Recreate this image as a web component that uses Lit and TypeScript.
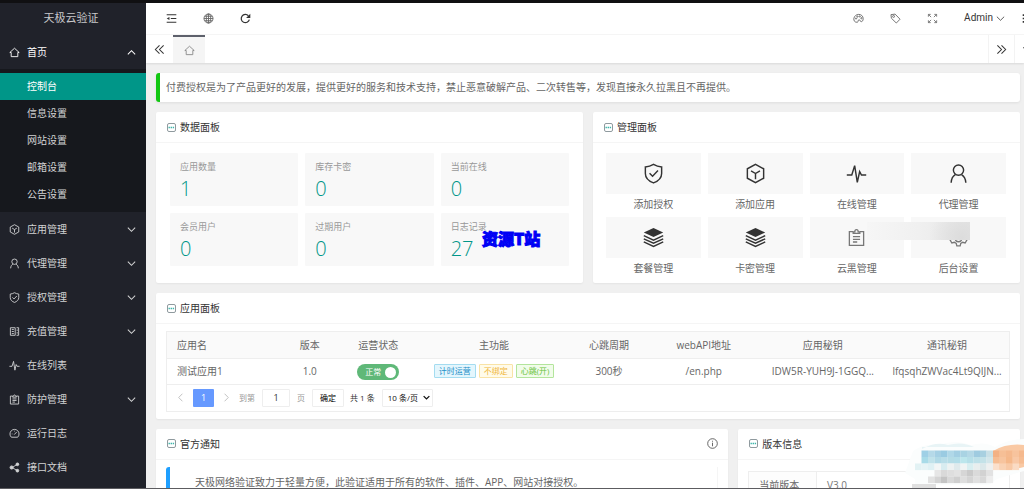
import { LitElement, html, css, svg } from "lit";
import { customElement, property, state } from "lit/decorators.js";
import { classMap } from "lit/directives/class-map.js";

const icons: Record<string, unknown> = {
  home: svg`<path d="M1.2 8 8 1.8 14.8 8H12.8V14H3.2V8Z"/>`,
  cube: svg`<path d="M8 1 14.2 4.4V11.6L8 15 1.8 11.6V4.4ZM4.6 6 8 8 11.4 6M8 8V12.4"/>`,
  user: svg`<circle cx="8" cy="5.4" r="3.9"/><path d="M2.4 15C2.6 11.6 4 9.8 5.6 8.9M10.4 9.1C12.4 10.2 13.4 12.2 13.6 15"/>`,
  shield: svg`<path d="M8 1C10 2.2 12 2.8 14.2 3V8C14.2 11.6 11.6 13.8 8 15.2 4.4 13.8 1.8 11.6 1.8 8V3C4 2.8 6 2.2 8 1ZM5 7.8 7.3 10.1 11.4 5.8"/>`,
  ledger: svg`<path d="M2 2.5H9V13.5H2ZM4 5H7M4 8H7M4 11H7M11 2.5H14V13.5H11M11 6H13M11 10H13"/>`,
  pulse: svg`<path d="M.6 9.2H4.4L6.6 2 8.6 14.8 10.4 6.6 11.8 9.2H15.4"/>`,
  clipboard: svg`<path d="M5.2 3H2V14.6H14V3H10.8M5.2 4.6V3.2H6.6A1.4 1.8 0 0 1 9.4 3.2H10.8V4.6ZM5 7.2H11M5 9.5H11M5 11.8H8.6"/>`,
  gauge: svg`<path d="M3.4 13.4A6.6 6.6 0 1 1 12.6 13.4ZM7.6 9.6 11.2 5.8M4 8.6H5M8 4V5"/>`,
  share: svg`<path d="M12 3.4 4.6 8 12 12.6"/><g fill="currentColor"><circle cx="3.8" cy="8" r="2.3"/><circle cx="12.2" cy="3.4" r="2"/><circle cx="12.2" cy="12.6" r="2"/></g>`,
  up: svg`<path d="M1.5 11.2 8 4.8 14.5 11.2"/>`,
  down: svg`<path d="M1.5 4.8 8 11.2 14.5 4.8"/>`,
  left: svg`<path d="M10.8 2.5 5.4 8 10.8 13.5"/>`,
  right: svg`<path d="M5.2 2.5 10.6 8 5.2 13.5"/>`,
  first: svg`<path d="M8 2 2 8 8 14M14 2 8 8 14 14"/>`,
  last: svg`<path d="M2 2 8 8 2 14M8 2 14 8 8 14"/>`,
  fold: svg`<path d="M1 2.5H15M7 8H15M1 13.5H15"/><path fill="currentColor" stroke="none" d="M1 8 5 5.8V10.2Z"/>`,
  globe: svg`<circle cx="8" cy="8" r="6.6"/><ellipse cx="8" cy="8" rx="3.2" ry="6.6"/><path d="M8 1.4V14.6M1.4 8H14.6M2.4 4.8H13.6M2.4 11.2H13.6"/>`,
  refresh: svg`<path d="M13.6 9.6A6 6 0 1 1 12.2 4"/><path fill="currentColor" stroke="none" d="M15 1V7.2H8.8Z"/>`,
  palette: svg`<path d="M6.4 13.4C2.8 14.2.8 11 1.2 8 1.8 4.4 5 2 8.4 2 12 2 14.8 4.6 14.8 8.2 14.8 11 13.6 12.6 12 12.6 10 12.6 11 9.8 8.8 9.8 6.8 9.8 8.2 13 6.4 13.4Z"/><circle cx="4.4" cy="8" r=".9"/><circle cx="6.4" cy="5.2" r=".9"/><circle cx="9.8" cy="5" r=".9"/><circle cx="12.2" cy="7.6" r=".9"/>`,
  tag: svg`<path d="M1.4 2.4 7.4 1.6 14.6 9 9.2 14.6 2 7.6Z"/><circle cx="5.2" cy="5" r="1.4"/>`,
  expand: svg`<path d="M2 5.4V2H5.4M2.2 2.2 6 6M10.6 2H14V5.4M13.8 2.2 10 6M2 10.6V14H5.4M2.2 13.8 6 10M14 10.6V14H10.6M13.8 13.8 10 10"/>`,
  more: svg`<path stroke-width="2.4" d="M1 3H15M1 8H15M1 13H15"/>`,
  layers: svg`<path fill="currentColor" stroke="none" d="M8 .8 15.4 4.2 8 7.6.6 4.2Z"/><path d="M.6 6.6 8 10 15.4 6.6M.6 9 8 12.4 15.4 9M.6 11.4 8 14.8 15.4 11.4"/>`,
  gear: svg`<path d="M6.6 1.4H9.4L9.9 3.5 11.5 4.4 13.6 3.8 15 6.2 13.4 7.6V8.9L15 10.2 13.6 12.6 11.5 12 9.9 12.9 9.4 15H6.6L6.1 12.9 4.5 12 2.4 12.6 1 10.2 2.6 8.9V7.6L1 6.2 2.4 3.8 4.5 4.4 6.1 3.5Z"/><circle cx="8" cy="9" r="2.6"/>`,
  info: svg`<circle cx="8" cy="8" r="7"/><path d="M8 6.8V12M8 4V5.4"/>`,
};

@customElement("ui-icon")
export class UiIcon extends LitElement {
  @property() name = "";
  @property({ type: Number }) stroke = 1.3;
  static styles = css`
    :host { display: inline-flex; width: 11px; height: 11px; flex: none; }
    svg { width: 100%; height: 100%; display: block; }
  `;
  render() {
    return html`<svg viewBox="0 0 16 16" fill="none" stroke="currentColor" stroke-width=${this.stroke} aria-hidden="true">${icons[this.name]}</svg>`;
  }
}

@customElement("panel-card")
export class PanelCard extends LitElement {
  @property() heading = "";
  @property({ type: Boolean }) info = false;
  static styles = css`
    :host { display: block; background: #fff; border-radius: 2px; box-shadow: 0 1px 2px rgba(0, 0, 0, 0.05); min-width: 0; }
    header { display: flex; align-items: center; height: 31px; padding: 0 10px 0 11px; border-bottom: 1px solid #f5f5f5; box-sizing: border-box; }
    .mark { width: 9px; height: 9px; margin-right: 4px; }
    h2 { margin: 0; font-size: 10px; font-weight: 400; line-height: 30px; color: #333; flex: 1; }
    ui-icon { color: #555; }
  `;
  render() {
    return html`<header>
        <svg class="mark" viewBox="0 0 9 9" fill="none" aria-hidden="true">
          <rect x=".5" y=".5" width="8" height="8" rx="1.5" stroke="#8f9a9e" />
          <path d="M1.5 4.5H7.5" stroke="#3eb5aa" stroke-width="1.4" stroke-dasharray="1.4 .7" />
        </svg>
        <h2>${this.heading}</h2>
        ${this.info ? html`<ui-icon name="info"></ui-icon>` : null}
      </header>
      <slot></slot>`;
  }
}

const subItems = ["控制台", "信息设置", "网站设置", "邮箱设置", "公告设置"];
const navItems = [
  { icon: "cube", label: "应用管理", sub: true },
  { icon: "user", label: "代理管理", sub: true },
  { icon: "shield", label: "授权管理", sub: true },
  { icon: "ledger", label: "充值管理", sub: true },
  { icon: "pulse", label: "在线列表", sub: false },
  { icon: "clipboard", label: "防护管理", sub: true },
  { icon: "gauge", label: "运行日志", sub: false },
  { icon: "share", label: "接口文档", sub: false },
];
const stats = [
  ["应用数量", "1"], ["库存卡密", "0"], ["当前在线", "0"],
  ["会员用户", "0"], ["过期用户", "0"], ["日志记录", "27"],
];
const actions = [
  ["shield", "添加授权"], ["cube", "添加应用"], ["pulse", "在线管理"], ["user", "代理管理"],
  ["layers", "套餐管理"], ["layers", "卡密管理"], ["clipboard", "云黑管理"], ["gear", "后台设置"],
];
const columns = ["应用名", "版本", "运营状态", "主功能", "心跳周期", "webAPI地址", "应用秘钥", "通讯秘钥"];

/* Mosaic tiles, 6.5 units each: column, row, colour. */
const tiles: [number, number, string][] = [
  [3, 1, "#9fd0e6"], [4, 1, "#b5d9e8"], [5, 1, "#a5d0e4"], [6, 1, "#9acbe2"], [7, 1, "#b0d8e8"], [8, 1, "#a3cfe3"], [9, 1, "#a9d3e3"], [10, 1, "#b4d8e6"], [11, 1, "#9fcbe0"], [12, 1, "#a8d0e0"], [13, 1, "#c9e0e6"],
  [3, 2, "#a8dbe8"], [4, 2, "#c0e2ea"], [5, 2, "#b0d9e6"], [6, 2, "#b8dde8"], [7, 2, "#b4dce6"], [8, 2, "#b2dde8"], [9, 2, "#bce6ec"], [10, 2, "#b6dfe8"], [11, 2, "#bde0e8"], [12, 2, "#c4e2e8"], [13, 2, "#d3e6ea"],
  [2, 3, "#e2f2f4"], [3, 3, "#e6f4f6"], [4, 3, "#dff1f4"], [5, 3, "#f2f6f6"], [6, 3, "#d8ecf0"], [7, 3, "#edf2f2"], [8, 3, "#dfeaec"], [9, 3, "#f0f4f4"], [10, 3, "#d8eef0"], [11, 3, "#e8eeee"], [12, 3, "#dce8ea"], [13, 3, "#eef0f0"],
  [5, 4, "#e6e6e6"], [6, 4, "#d9d9d9"], [7, 4, "#dedede"], [8, 4, "#e2e2e2"], [9, 4, "#d6d6d6"], [10, 4, "#cacaca"], [11, 4, "#dadada"], [12, 4, "#d2d2d2"], [13, 4, "#e2e2e2"],
  [4, 5, "#e2e2e2"], [5, 5, "#d4d4d4"], [6, 5, "#c4c4c4"], [7, 5, "#d8d8d8"], [8, 5, "#cfcfcf"], [9, 5, "#dedede"], [10, 5, "#d4d4d4"], [11, 5, "#e0e0e0"], [12, 5, "#d8d8d8"], [13, 5, "#ededed"],
  [14, 1, "#f3b184"], [15, 1, "#f6bf96"], [16, 1, "#f5b98e"], [17, 1, "#f7c39d"], [18, 1, "#f5b98e"],
  [14, 2, "#f6bd93"], [15, 2, "#f7c49e"], [16, 2, "#f5b88a"], [17, 2, "#f8c8a6"], [18, 2, "#f6bd93"],
  [14, 3, "#fbe0cc"], [15, 3, "#f9d2b4"], [16, 3, "#f8c9a6"], [17, 3, "#fadbc4"],
];

@customElement("app-root")
export class AppRoot extends LitElement {
  @state() active = 0;
  @state() open = true;

  static styles = css`
    :host {
      display: flex; flex-direction: column; height: 100vh; overflow: hidden; position: relative;
      border-top: 3px solid #101012; border-bottom: 1px solid #5c5c60; box-sizing: border-box;
      font: 10px/20px "Open Sans", "Noto Sans CJK SC", sans-serif; color: #666; background: #f0f0f0;
    }
    * { box-sizing: border-box; }
    button, input, select { font: inherit; color: inherit; margin: 0; padding: 0; border: 0; background: none; }
    button { cursor: pointer; display: inline-flex; align-items: center; justify-content: center; }
    a { color: inherit; text-decoration: none; }
    .shell { flex: 1; min-height: 0; display: flex; }
    .side { width: 146px; flex: none; background: #20222a; color: #d2d3d4; overflow: hidden; }
    .brand { height: 32px; line-height: 30px; padding-right: 4px; text-align: center; font-size: 11px; color: #c8c9cb; }
    .item { display: flex; align-items: center; width: 100%; height: 34px; padding: 0 10px 0 9px; gap: 7px; text-align: left; }
    .item span { flex: 1; }
    .item.on { color: #fff; }
    .arrow { width: 9px; height: 9px; }
    .sub { background: #16181d; padding: 4px 0; }
    .sub a { display: block; height: 27px; line-height: 27px; padding-left: 27px; }
    .sub a.on { background: #009688; color: #fff; }
    .main { flex: 1; min-width: 0; display: flex; flex-direction: column; }
    .top { display: flex; height: 32px; flex: none; background: #fff; padding: 0 0 1px 7px; border-bottom: 1px solid #f6f6f6; color: #333; }
    .top .tool { width: 37px; }
    .spacer { flex: 1; }
    .top .soft { color: #666; }
    .admin { padding: 0 10px 0 13px; gap: 3px; font-family: Roboto, sans-serif; }
    .more { width: 9px; overflow: hidden; justify-content: flex-start; padding-left: 7px; }
    .tabs { display: flex; height: 28px; flex: none; background: #fff; box-shadow: 0 1px 2px rgba(0, 0, 0, 0.1); color: #333; }
    .tabs .edge { width: 27px; }
    .tabs .tab { width: 32px; background: #f5f5f5; border-top: 2px solid #5d606b; color: #888; }
    .tabs .next { border: solid #f3f3f3; border-width: 0 1px; }
    .tabs .menu { width: 9px; overflow: hidden; justify-content: flex-start; padding-left: 7px; }
    .page { flex: 1; min-height: 0; overflow: hidden; padding: 10px 4px 0 10px; display: flex; flex-direction: column; gap: 10px; }
    .page > * { flex: none; }
    .tip { background: #fff; border-left: 4px solid #12c712; border-radius: 3px; padding: 4px 6px 5px; box-shadow: 0 1px 3px rgba(0, 0, 0, 0.08); white-space: nowrap; overflow: hidden; }
    .row { display: grid; gap: 10px; grid-template-columns: 1fr 1fr; }
    .row.wide { grid-template-columns: 67fr 33fr; }
    .stats { display: grid; grid-template-columns: repeat(3, 1fr); gap: 7px; padding: 10px 14px 17px; }
    .stat { display: block; background: #f8f8f8; height: 53px; padding: 5px 10px 4px; border-radius: 1px; }
    .stat h3 { margin: 0; font-size: 9px; font-weight: 400; line-height: 18px; color: #999; }
    .stat p { margin: 0; font-size: 20px; font-weight: 300; line-height: 26px; color: #009688; }
    .actions { display: grid; grid-template-columns: repeat(4, 1fr); gap: 3px 7px; padding: 10px 14px 4px 13px; }
    .actions a { display: block; text-align: center; }
    .box { display: flex; align-items: center; justify-content: center; height: 41px; background: #f8f8f8; color: #333; }
    .box ui-icon { width: 21px; height: 21px; }
    .box .thin { width: 19px; height: 19px; color: #777; }
    .grid { margin: 7px 10px; border: 1px solid #eee; }
    .data { width: 100%; border-collapse: collapse; table-layout: fixed; }
    .data th, .data td { font-weight: 400; text-align: center; padding: 0 4px; white-space: nowrap; height: 26px; border-bottom: 1px solid #eee; }
    .data th { background: #fafafa; }
    .data th:first-child, .data td:first-child { text-align: left; padding-left: 10px; }
    .c1 { width: 13.4%; } .c2 { width: 7.1%; } .c3 { width: 9.2%; } .c4 { width: 18.3%; }
    .c5 { width: 9%; } .c6 { width: 13.5%; } .c7 { width: 14.8%; } .c8 { width: 14.7%; }
    .switch { display: inline-flex; align-items: center; vertical-align: middle; width: 42px; height: 16px; border-radius: 8px; background: #5fb878; color: #fff; font-size: 8px; line-height: 16px; padding: 0 3px 0 8px; justify-content: space-between; cursor: pointer; }
    .switch input { appearance: none; width: 11px; height: 11px; border-radius: 50%; background: #fff; }
    .tags { display: flex; justify-content: center; gap: 3px; }
    .tag { font-size: 8px; line-height: 12px; border: 1px solid; border-radius: 1px; padding: 0 4px; }
    .blue { color: #1e8fc8; border-color: #a4dcf0; background: #e4f6fd; }
    .gold { color: #f0b73c; border-color: #f9e3a6; background: #fffbea; }
    .green { color: #67c23a; border-color: #b3e59c; background: #f1fcea; }
    .pager { display: flex; align-items: center; height: 26px; padding-left: 8px; font-size: 8px; color: #333; line-height: 16px; }
    .pager .step { width: 11px; height: 18px; color: #bbb; }
    .pager .cur { width: 21px; height: 18px; margin: 0 7px; font-size: 9px; background: #6699ff; color: #fff; border-radius: 1px; display: flex; align-items: center; justify-content: center; }
    .pager label { display: flex; align-items: center; gap: 7px; color: #999; margin-left: 7px; }
    .pager input, .pager select, .pager .go { height: 18px; border: 1px solid #eee; border-radius: 1px; color: #333; background: #fff; }
    .pager input { width: 28px; text-align: center; font-size: 9px; }
    .pager .go { width: 32px; margin: 0 6px 0 7px; color: #000; }
    .size { position: relative; display: flex; align-items: center; margin-left: 7px; color: #111; }
    .size select { appearance: none; width: 51px; padding-left: 5px; color: #111; }
    .size ui-icon { position: absolute; right: 3px; width: 7px; height: 7px; pointer-events: none; }
    .quote { margin: 7px 10px; border-left: 4px solid #1e9fff; border-right: 1px solid #f5f5f5; border-radius: 3px 0 0 3px; padding: 5px 25px; }
    .ver { margin: 11px 10px; width: calc(100% - 20px); border-collapse: collapse; }
    .ver th, .ver td { border: 1px solid #eee; height: 28px; font-weight: 400; text-align: left; padding: 0 10px; }
    .ver th { width: 26%; white-space: nowrap; background: #fdfdfd; }
    .ver td { color: #777; }
    .stamp { position: absolute; left: 482px; top: 223px; font: 900 16px/24px "Noto Sans CJK SC", sans-serif; color: #0000f5; -webkit-text-stroke: 1px #0000f5; }
    .smudge { position: absolute; left: 867px; top: 219px; width: 103px; height: 18px; background: radial-gradient(circle at 92% 85%, #dcdcdc, transparent 34%), linear-gradient(90deg, #f6f6f6, #f0f0f0 50%, #e6e6e6); }
    .mosaic { position: absolute; right: 0; bottom: 0; width: 119px; height: 49px; }
  `;

  render() {
    return html`
      <div class="shell">
        <nav class="side">
          <div class="brand">天极云验证</div>
          <button class="item on" @click=${() => (this.open = !this.open)}>
            <ui-icon name="home"></ui-icon><span>首页</span>
            <ui-icon class="arrow" stroke="1.8" name=${this.open ? "up" : "down"}></ui-icon>
          </button>
          ${this.open
            ? html`<div class="sub">
                ${subItems.map((t, i) => html`<a href="#" class=${classMap({ on: i === this.active })} @click=${(e: Event) => { e.preventDefault(); this.active = i; }}>${t}</a>`)}
              </div>`
            : null}
          ${navItems.map((n) => html`<button class="item">
            <ui-icon name=${n.icon}></ui-icon><span>${n.label}</span>
            ${n.sub ? html`<ui-icon class="arrow" stroke="1.8" name="down"></ui-icon>` : null}
          </button>`)}
        </nav>
        <div class="main">
          <div class="top">
            <button class="tool" aria-label="折叠"><ui-icon name="fold" stroke="1.6"></ui-icon></button>
            <button class="tool soft" aria-label="网站"><ui-icon name="globe"></ui-icon></button>
            <button class="tool" aria-label="刷新"><ui-icon name="refresh" stroke="1.8"></ui-icon></button>
            <span class="spacer"></span>
            <button class="tool soft" aria-label="主题"><ui-icon name="palette"></ui-icon></button>
            <button class="tool soft" aria-label="标签"><ui-icon name="tag"></ui-icon></button>
            <button class="tool soft" aria-label="全屏"><ui-icon name="expand" stroke="1.2"></ui-icon></button>
            <button class="admin">Admin<ui-icon class="arrow" name="down" stroke="1.4"></ui-icon></button>
            <button class="more" aria-label="更多"><ui-icon name="more"></ui-icon></button>
          </div>
          <div class="tabs">
            <button class="edge" aria-label="向左"><ui-icon name="first" stroke="1.5"></ui-icon></button>
            <button class="tab" aria-label="首页"><ui-icon name="home"></ui-icon></button>
            <span class="spacer"></span>
            <button class="edge next" aria-label="向右"><ui-icon name="last" stroke="1.5"></ui-icon></button>
            <button class="menu" aria-label="菜单"><ui-icon name="down"></ui-icon></button>
          </div>
          <main class="page">
            <div class="tip">付费授权是为了产品更好的发展，提供更好的服务和技术支持，禁止恶意破解产品、二次转售等，发现直接永久拉黑且不再提供。</div>
            <div class="row">
              <panel-card heading="数据面板">
                <div class="stats">${stats.map(([l, v]) => html`<a href="#" class="stat"><h3>${l}</h3><p>${v}</p></a>`)}</div>
              </panel-card>
              <panel-card heading="管理面板">
                <div class="actions">
                  ${actions.map(([i, l]) => html`<a href="#"><span class="box"><ui-icon name=${i} stroke="1.1" class=${classMap({ thin: i === "clipboard" || i === "gear" })}></ui-icon></span>${l}</a>`)}
                </div>
              </panel-card>
            </div>
            <panel-card heading="应用面板">
              <div class="grid">
                <table class="data">
                  <colgroup>${columns.map((_, i) => html`<col class=${"c" + (i + 1)} />`)}</colgroup>
                  <thead><tr>${columns.map((c) => html`<th>${c}</th>`)}</tr></thead>
                  <tbody><tr>
                    <td>测试应用1</td><td>1.0</td>
                    <td><label class="switch">正常<input type="checkbox" checked /></label></td>
                    <td><div class="tags"><span class="tag blue">计时运营</span><span class="tag gold">不绑定</span><span class="tag green">心跳(开)</span></div></td>
                    <td>300秒</td><td>/en.php</td><td>IDW5R-YUH9J-1GGQ...</td><td>lfqsqhZWVac4Lt9QIJN...</td>
                  </tr></tbody>
                </table>
                <div class="pager">
                  <button class="step" aria-label="上一页"><ui-icon name="left"></ui-icon></button>
                  <span class="cur">1</span>
                  <button class="step" aria-label="下一页"><ui-icon name="right"></ui-icon></button>
                  <label>到第<input type="text" value="1" />页</label>
                  <button class="go">确定</button>
                  <span>共 1 条</span>
                  <span class="size"><select aria-label="每页条数"><option>10 条/页</option></select><ui-icon name="down" stroke="3"></ui-icon></span>
                </div>
              </div>
            </panel-card>
            <div class="row wide">
              <panel-card heading="官方通知" info>
                <div class="quote">天极网络验证致力于轻量方便，此验证适用于所有的软件、插件、APP、网站对接授权。</div>
              </panel-card>
              <panel-card heading="版本信息">
                <table class="ver"><tbody><tr><th>当前版本</th><td>V3.0</td></tr></tbody></table>
              </panel-card>
            </div>
          </main>
        </div>
      </div>
      <div class="stamp">资源T站</div>
      <div class="smudge"></div>
      <svg class="mosaic" viewBox="0 0 119 49" aria-hidden="true">
        <path d="M8 12Q20 4 34 6 50 0 66 6 80 2 90 8 104 0 119 0V32L92 40 84 46H10V40L0 34Z" fill="#fbfdfd" />
        <path d="M17 10Q31 2 43 6 57 2 69 8H17Z" fill="#e8f4f6" />
        <path d="M88 12Q102 4 119 6V28Q102 32 89 30Z" fill="#f9c9a4" />
        ${tiles.map(([c, r, f]) => svg`<rect x=${c * 6.5 - 3} y=${r * 6.5 + 5} width="6.6" height="6.6" fill=${f} />`)}
        <path d="M7 45H31V49H7Z" fill="#e0e0e0" />
      </svg>
    `;
  }
}
